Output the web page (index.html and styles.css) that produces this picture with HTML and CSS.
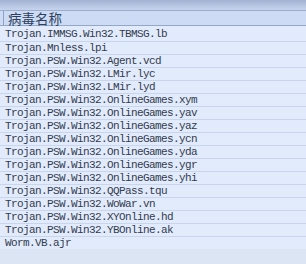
FILE: index.html
```html
<!DOCTYPE html>
<html>
<head>
<meta charset="utf-8">
<link rel="stylesheet" href="styles.css">
</head>
<body>
<div class="panel">
  <div class="titlebar"></div>
  <div class="header"><div class="hcell">病毒名称</div></div>
  <ul class="list">
    <li>Trojan.IMMSG.Win32.TBMSG.lb</li>
    <li>Trojan.Mnless.lpi</li>
    <li>Trojan.PSW.Win32.Agent.vcd</li>
    <li>Trojan.PSW.Win32.LMir.lyc</li>
    <li>Trojan.PSW.Win32.LMir.lyd</li>
    <li>Trojan.PSW.Win32.OnlineGames.xym</li>
    <li>Trojan.PSW.Win32.OnlineGames.yav</li>
    <li>Trojan.PSW.Win32.OnlineGames.yaz</li>
    <li>Trojan.PSW.Win32.OnlineGames.ycn</li>
    <li>Trojan.PSW.Win32.OnlineGames.yda</li>
    <li>Trojan.PSW.Win32.OnlineGames.ygr</li>
    <li>Trojan.PSW.Win32.OnlineGames.yhi</li>
    <li>Trojan.PSW.Win32.QQPass.tqu</li>
    <li>Trojan.PSW.Win32.WoWar.vn</li>
    <li>Trojan.PSW.Win32.XYOnline.hd</li>
    <li>Trojan.PSW.Win32.YBOnline.ak</li>
    <li>Worm.VB.ajr</li>
  </ul>
  <div class="footer"></div>
</div>
</body>
</html>
```
FILE: styles.css
```css
html, body {
  margin: 0;
  padding: 0;
  background: #dce5f3;
}
.panel {
  width: 306px;
  height: 264px;
  display: flex;
  flex-direction: column;
  overflow: hidden;
}
.titlebar {
  height: 10px;
  background: linear-gradient(#a2b2d2, #c6d4ee);
  border-bottom: 1px solid #9cadcc;
  flex: none;
}
.header {
  height: 14px;
  background: #cddcf4;
  border-bottom: 1px solid #95a7c6;
  flex: none;
  display: flex;
}
.hcell {
  margin-left: 3px;
  padding-left: 4px;
  border-left: 1px solid #8fa2c4;
  font-family: "Noto Sans CJK SC", sans-serif;
  font-size: 13.5px;
  line-height: 14px;
  color: #2e3f60;
}
.list {
  list-style: none;
  margin: 0;
  padding: 0;
  background: #e1ebfc;
  flex: none;
}
.list li {
  height: 12px;
  line-height: 12px;
  padding-left: 5px;
  border-bottom: 1px solid #c9d5ea;
  font-family: "Liberation Mono", monospace;
  font-size: 11px;
  letter-spacing: -0.6px;
  color: #333b4e;
  white-space: nowrap;
}
.list li:first-child {
  padding-top: 2px;
  padding-bottom: 1px;
}
.list li:last-child {
  border-bottom: none;
}
.footer {
  flex: 1;
  background: #dce5f3;
}
```
